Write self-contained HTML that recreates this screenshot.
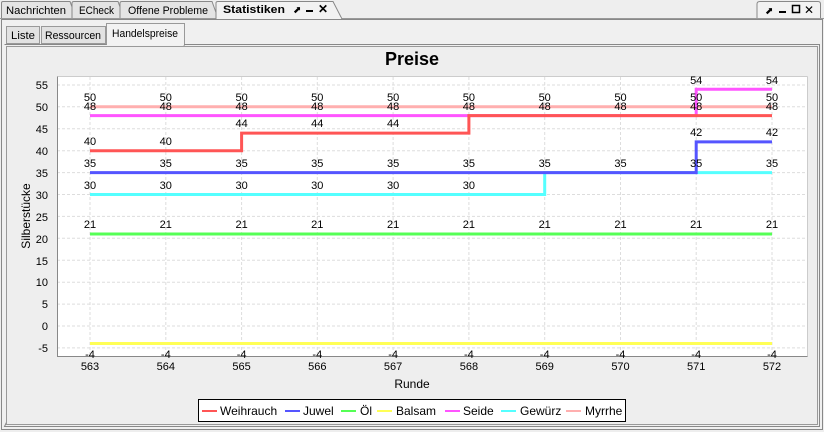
<!DOCTYPE html>
<html><head><meta charset="utf-8"><style>
body{margin:0;width:824px;height:432px;background:#eeeeee;font-family:"Liberation Sans",sans-serif;overflow:hidden;position:relative}
</style></head><body>
<svg width="824" height="432" style="position:absolute;left:0;top:0" font-family="Liberation Sans, sans-serif">
<rect x="0" y="0" width="824" height="432" fill="#eeeeee"/>
<line x1="0" y1="18.5" x2="824" y2="18.5" stroke="#999"/>
<path d="M1.5 18 V3 Q1.5 1.5 3 1.5 H70 L76 18" fill="#e4e4e4" stroke="#888"/>
<path d="M72 18 V3 Q72 1.5 74 1.5 H118 L124 18" fill="#e4e4e4" stroke="#888"/>
<path d="M120 18 V3 Q120 1.5 122 1.5 H212 L218 18" fill="#e4e4e4" stroke="#888"/>
<path d="M216 19 V3 Q216 1.5 218 1.5 H333 L342 19" fill="#f2f2f2" stroke="#888"/>
<line x1="217" y1="18.5" x2="341" y2="18.5" stroke="#f2f2f2" stroke-width="2"/>
<text x="6" y="14" font-size="11" textLength="60" lengthAdjust="spacingAndGlyphs">Nachrichten</text>
<text x="79" y="14" font-size="11" textLength="35" lengthAdjust="spacingAndGlyphs">ECheck</text>
<text x="128" y="14" font-size="11" textLength="80" lengthAdjust="spacingAndGlyphs">Offene Probleme</text>
<text x="223" y="13" font-size="11" font-weight="bold" textLength="62" lengthAdjust="spacingAndGlyphs">Statistiken</text>
<text x="293" y="13" font-size="10">⬈</text>
<rect x="306" y="10" width="7" height="2" fill="#000"/>
<text x="318" y="13" font-size="12" font-weight="bold">✕</text>
<path d="M757 18 V4 Q757 1.5 760 1.5 H818 Q820.5 1.5 820.5 4 V18" fill="#f2f2f2" stroke="#888"/>
<text x="765" y="14" font-size="10">⬈</text>
<rect x="779" y="11" width="7" height="2" fill="#000"/>
<rect x="792.5" y="5.5" width="7" height="7" fill="none" stroke="#000" stroke-width="1.5"/>
<text x="804" y="14" font-size="12">✕</text>
<rect x="1.5" y="19.5" width="821" height="410" fill="#f0f0f0" stroke="#888"/>
<rect x="6.5" y="26.5" width="33" height="17" fill="#e2e2e2" stroke="#999"/>
<rect x="41.5" y="26.5" width="64" height="17" fill="#e2e2e2" stroke="#999"/>
<rect x="106.5" y="23.5" width="78" height="21" fill="#f2f2f2" stroke="#999"/>
<text x="11" y="39" font-size="11" textLength="24" lengthAdjust="spacingAndGlyphs">Liste</text>
<text x="45" y="39" font-size="11" textLength="56" lengthAdjust="spacingAndGlyphs">Ressourcen</text>
<text x="112" y="37" font-size="11" textLength="66" lengthAdjust="spacingAndGlyphs">Handelspreise</text>
<path d="M4.5 44.5 H106.5 M184.5 44.5 H819.5 V426.5 H4.5 Z" fill="none" stroke="#888"/>
<rect x="6.5" y="46.5" width="811" height="378" fill="#eeeeee" stroke="#999"/>
<line x1="107" y1="44.5" x2="184" y2="44.5" stroke="#f2f2f2" stroke-width="2"/>
<text x="412" y="65" font-size="18" font-weight="bold" text-anchor="middle">Preise</text>
<rect x="57" y="77" width="750" height="279" fill="#ffffff"/>
<g stroke="#dddddd" stroke-dasharray="3,2" stroke-width="1">
<line x1="57" y1="85" x2="807" y2="85"/><line x1="57" y1="106.8" x2="807" y2="106.8"/>
<line x1="57" y1="128.7" x2="807" y2="128.7"/><line x1="57" y1="150.7" x2="807" y2="150.7"/>
<line x1="57" y1="172.6" x2="807" y2="172.6"/><line x1="57" y1="194.5" x2="807" y2="194.5"/>
<line x1="57" y1="216.4" x2="807" y2="216.4"/><line x1="57" y1="238.3" x2="807" y2="238.3"/>
<line x1="57" y1="260.3" x2="807" y2="260.3"/><line x1="57" y1="282.2" x2="807" y2="282.2"/>
<line x1="57" y1="304.1" x2="807" y2="304.1"/><line x1="57" y1="326" x2="807" y2="326"/>
<line x1="57" y1="347.9" x2="807" y2="347.9"/>
<line x1="90" y1="77" x2="90" y2="356"/><line x1="165.8" y1="77" x2="165.8" y2="356"/>
<line x1="241.6" y1="77" x2="241.6" y2="356"/><line x1="317.3" y1="77" x2="317.3" y2="356"/>
<line x1="393.1" y1="77" x2="393.1" y2="356"/><line x1="468.9" y1="77" x2="468.9" y2="356"/>
<line x1="544.7" y1="77" x2="544.7" y2="356"/><line x1="620.5" y1="77" x2="620.5" y2="356"/>
<line x1="696.2" y1="77" x2="696.2" y2="356"/><line x1="772" y1="77" x2="772" y2="356"/>
</g>
<path d="M807.5 76.5 V356.5 M57.5 76.5 H807.5" fill="none" stroke="#ccc"/>
<path d="M57.5 76.5 V356.5 H807.5" fill="none" stroke="#888" stroke-width="1"/>
<g font-size="11" text-anchor="end">
<text x="48" y="89">55</text><text x="48" y="111">50</text><text x="48" y="133">45</text>
<text x="48" y="155">40</text><text x="48" y="177">35</text><text x="48" y="199">30</text>
<text x="48" y="221">25</text><text x="48" y="243">20</text><text x="48" y="265">15</text>
<text x="48" y="286">10</text><text x="48" y="308">5</text><text x="48" y="330">0</text>
<text x="48" y="352">-5</text>
</g>
<g font-size="11" text-anchor="middle">
<text x="90" y="370">563</text><text x="165.8" y="370">564</text><text x="241.6" y="370">565</text>
<text x="317.3" y="370">566</text><text x="393.1" y="370">567</text><text x="468.9" y="370">568</text>
<text x="544.7" y="370">569</text><text x="620.5" y="370">570</text><text x="696.2" y="370">571</text>
<text x="772" y="370">572</text>
<text x="412" y="388" font-size="12">Runde</text>
<text transform="translate(30,216) rotate(-90)" font-size="12">Silberstücke</text>
</g>
<g fill="none" stroke-width="3">
<path d="M90 343.5 H772" stroke="#ffff55"/>
<path d="M90 234 H772" stroke="#55ff55"/>
<path d="M90 194.5 H544.7 V172.6 H772" stroke="#55ffff"/>
<path d="M90 172.6 H696.2 V141.9 H772" stroke="#5555ff"/>
<path d="M90 106.8 H772" stroke="#ffafaf"/>
<path d="M90 115.6 H696.2 V89.3 H772" stroke="#ff55ff"/>
<path d="M90 150.7 H241.6 V133.1 H468.9 V115.6 H772" stroke="#ff5555"/>
</g>
<g font-size="11" text-anchor="middle">
<text x="90" y="101">50</text><text x="165.8" y="101">50</text><text x="241.6" y="101">50</text><text x="317.3" y="101">50</text><text x="393.1" y="101">50</text><text x="468.9" y="101">50</text><text x="544.7" y="101">50</text><text x="620.5" y="101">50</text><text x="696.2" y="101">50</text><text x="772" y="101">50</text>
<text x="90" y="110">48</text><text x="165.8" y="110">48</text><text x="241.6" y="110">48</text><text x="317.3" y="110">48</text><text x="393.1" y="110">48</text><text x="468.9" y="110">48</text><text x="544.7" y="110">48</text><text x="620.5" y="110">48</text><text x="696.2" y="110">48</text><text x="772" y="110">48</text>
<text x="696.2" y="84">54</text><text x="772" y="84">54</text>
<text x="241.6" y="127">44</text><text x="317.3" y="127">44</text><text x="393.1" y="127">44</text>
<text x="696.2" y="136">42</text><text x="772" y="136">42</text>
<text x="90" y="145">40</text><text x="165.8" y="145">40</text>
<text x="90" y="167">35</text><text x="165.8" y="167">35</text><text x="241.6" y="167">35</text><text x="317.3" y="167">35</text><text x="393.1" y="167">35</text><text x="468.9" y="167">35</text><text x="544.7" y="167">35</text><text x="620.5" y="167">35</text><text x="696.2" y="167">35</text><text x="772" y="167">35</text>
<text x="90" y="189">30</text><text x="165.8" y="189">30</text><text x="241.6" y="189">30</text><text x="317.3" y="189">30</text><text x="393.1" y="189">30</text><text x="468.9" y="189">30</text>
<text x="90" y="228">21</text><text x="165.8" y="228">21</text><text x="241.6" y="228">21</text><text x="317.3" y="228">21</text><text x="393.1" y="228">21</text><text x="468.9" y="228">21</text><text x="544.7" y="228">21</text><text x="620.5" y="228">21</text><text x="696.2" y="228">21</text><text x="772" y="228">21</text>
<text x="90" y="358">-4</text><text x="165.8" y="358">-4</text><text x="241.6" y="358">-4</text><text x="317.3" y="358">-4</text><text x="393.1" y="358">-4</text><text x="468.9" y="358">-4</text><text x="544.7" y="358">-4</text><text x="620.5" y="358">-4</text><text x="696.2" y="358">-4</text><text x="772" y="358">-4</text>
</g>
<rect x="198.5" y="399.5" width="427" height="22" fill="#fff" stroke="#000"/>
<g stroke-width="2">
<line x1="202" y1="411" x2="217" y2="411" stroke="#ff5555"/>
<line x1="285" y1="411" x2="300" y2="411" stroke="#5555ff"/>
<line x1="341" y1="411" x2="356" y2="411" stroke="#55ff55"/>
<line x1="377" y1="411" x2="392" y2="411" stroke="#ffff55"/>
<line x1="445" y1="411" x2="460" y2="411" stroke="#ff55ff"/>
<line x1="501" y1="411" x2="516" y2="411" stroke="#55ffff"/>
<line x1="566" y1="411" x2="581" y2="411" stroke="#ffafaf"/>
</g>
<g font-size="12">
<text x="220" y="415">Weihrauch</text><text x="303" y="415">Juwel</text><text x="360" y="415">Öl</text>
<text x="396" y="415">Balsam</text><text x="463" y="415">Seide</text><text x="520" y="415">Gewürz</text>
<text x="585" y="415">Myrrhe</text>
</g>
</svg>
</body></html>
